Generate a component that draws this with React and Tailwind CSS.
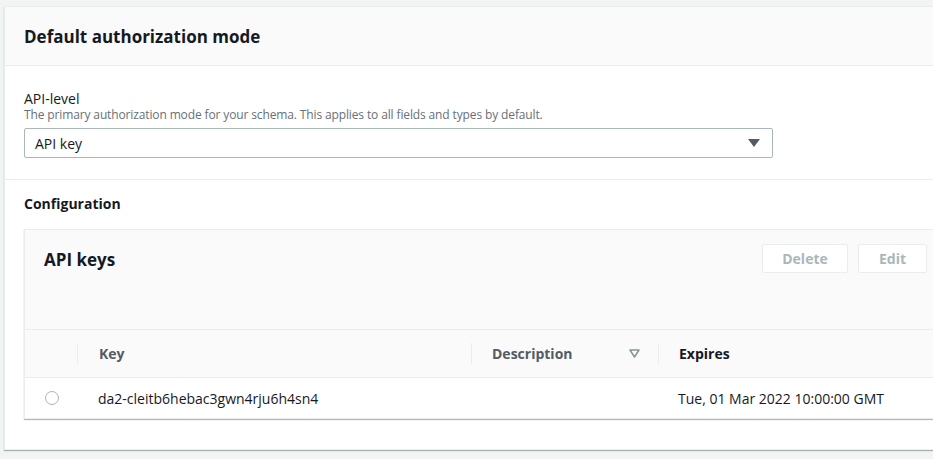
import React from "react";

const font = { fontFamily: '"Open Sans", "Noto Sans", Arial, sans-serif' };

export default function App() {
  return (
    <div className="w-[933px] h-[459px] overflow-hidden bg-[#f2f3f3] pt-[6px] pl-[4px]" style={font}>
      <div className="w-[940px] bg-white border border-[#eaeded] shadow-[0_1px_1px_0_rgba(0,28,36,0.3)]">
        <div className="h-[59px] bg-[#fafafa] border-b border-[#eaeded] flex items-center pl-[19px]">
          <h2 className="text-[17px] font-bold text-[#16191f] leading-none">Default authorization mode</h2>
        </div>
        <div className="pl-[19px] pt-[24px] pb-[21px]">
          <div className="text-[14px] leading-[17px] text-[#16191f]">API-level</div>
          <div className="text-[12px] leading-[15px] text-[#687078] tracking-[-0.13px]">The primary authorization mode for your schema. This applies to all fields and types by default.</div>
          <div className="mt-[6px] w-[749px] h-[30px] border border-[#aab7b8] rounded-[2px] flex items-center justify-between pl-[10px] pr-[12px]">
            <span className="text-[14px] text-[#16191f]">API key</span>
            <svg width="12" height="10" viewBox="0 0 12 10"><path d="M0 1h12L6 9z" fill="#545b64" /></svg>
          </div>
        </div>
        <div className="border-t border-[#eaeded] pl-[19px] pt-[15px] pb-[30px]">
          <h3 className="text-[14px] font-bold text-[#16191f] leading-[18px]">Configuration</h3>
          <div className="mt-[16px] border border-[#eaeded] shadow-[0_1px_1px_0_rgba(0,28,36,0.3)] bg-white">
            <div className="h-[100px] bg-[#fafafa] border-b border-[#eaeded] flex items-start justify-between pl-[19px] pt-[14px]">
              <h2 className="text-[17px] font-bold text-[#16191f] leading-[30px] mt-[1px]">API keys</h2>
              <div className="flex gap-[10px] pr-[15px]">
                <button className="w-[86px] h-[29px] border border-[#eaeded] bg-white rounded-[2px] text-[14px] font-bold text-[#aab7b8]">Delete</button>
                <button className="w-[69px] h-[29px] border border-[#eaeded] bg-white rounded-[2px] text-[14px] font-bold text-[#aab7b8]">Edit</button>
              </div>
            </div>
            <div className="h-[48px] bg-[#fafafa] border-b border-[#eaeded] flex items-center text-[14px] font-bold">
              <div className="w-[53px] h-[21px] border-r border-[#eaeded]"></div>
              <div className="w-[394px] pl-[21px] text-[#545b64] h-[21px] border-r border-[#eaeded] leading-[21px]">Key</div>
              <div className="w-[187px] pl-[20px] pr-[18px] text-[#545b64] h-[21px] border-r border-[#eaeded] leading-[21px] flex items-center justify-between">
                <span>Description</span>
                <svg width="11" height="9" viewBox="0 0 11 9"><path d="M1 1h9L5.5 8z" fill="none" stroke="#879596" strokeWidth="1.5" strokeLinejoin="round" /></svg>
              </div>
              <div className="pl-[20px] text-[#16191f] leading-[21px]">Expires</div>
            </div>
            <div className="h-[40px] flex items-center text-[14px] text-[#16191f]">
              <div className="w-[53px] flex justify-center pl-[1px]">
                <span className="w-[14px] h-[14px] rounded-full border border-[#aab7b8] bg-white"></span>
              </div>
              <div className="w-[394px] pl-[20px]">da2-cleitb6hebac3gwn4rju6h4sn4</div>
              <div className="w-[187px]"></div>
              <div className="pl-[19px]">Tue, 01 Mar 2022 10:00:00 GMT</div>
            </div>
          </div>
        </div>
      </div>
    </div>
  );
}
